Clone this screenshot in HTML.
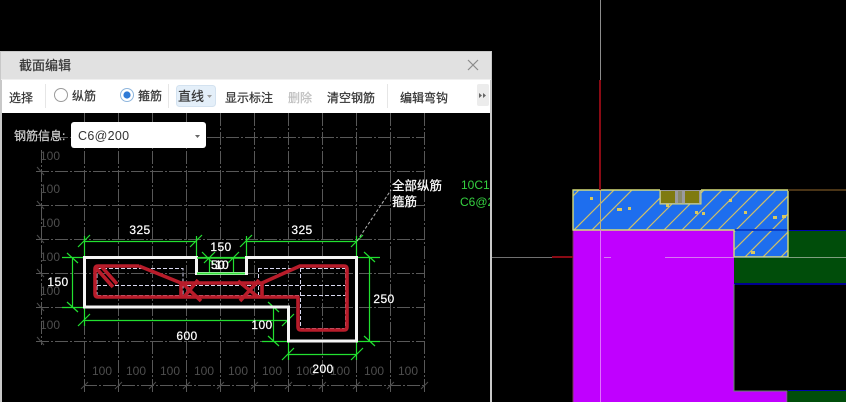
<!DOCTYPE html>
<html><head><meta charset="utf-8"><style>
html,body{margin:0;padding:0;background:#000;width:846px;height:402px;overflow:hidden}
svg{display:block}
text{font-family:"Liberation Sans","Noto Sans CJK SC",sans-serif}
.h text,text.h{stroke:currentColor;stroke-width:.22px}
</style></head><body>
<svg width="846" height="402" viewBox="0 0 846 402" xmlns="http://www.w3.org/2000/svg">
<defs>
<clipPath id="bl"><path d="M573 190H788V257H734V230H573Z"/></clipPath>
<clipPath id="cv"><rect x="2" y="113" width="488" height="289"/></clipPath>
</defs>
<rect width="846" height="402" fill="#000"/>

<!-- right CAD view -->
<rect x="734" y="230" width="112" height="54" fill="#004d0a"/>
<rect x="788" y="230" width="58" height="1" fill="#0000b0"/>
<rect x="734" y="283" width="112" height="2" fill="#000090"/>
<rect x="788" y="391" width="58" height="11" fill="#004d0a"/>
<rect x="788" y="390" width="58" height="1" fill="#0000b0"/>
<path d="M573 230H734V391H787V402H573Z" fill="#c000ff"/>
<path d="M734 284V391H787V402" fill="none" stroke="#5f8a68" stroke-width="1"/>
<path d="M573 231V402" stroke="#7a3a5a" stroke-width="1"/>
<path d="M573 190H788V257H734V230H573Z" fill="#1e6eee"/>
<g clip-path="url(#bl)" stroke="#d0c068" stroke-width="1.2" fill="none">
<path d="M555 214L581 188M572 232L617 187M590 232L635 187M626 232L671 187M644 232L689 187M662 232L707 187M680 232L725 187M698 232L743 187M716 232L761 187M728 238L779 187M725 259L797 187M743 259L797 205M761 259L797 223M779 259L797 241"/>
</g>
<g fill="#d8c860"><rect x="590" y="197" width="3" height="3"/><rect x="628" y="207" width="3" height="3"/><rect x="617" y="208" width="5" height="3"/><rect x="666" y="204" width="3" height="3"/><rect x="695" y="211" width="3" height="3"/><rect x="729" y="199" width="3" height="3"/><rect x="744" y="211" width="3" height="3"/><rect x="773" y="216" width="4" height="3"/><rect x="782" y="215" width="4" height="3"/><rect x="751" y="251" width="4" height="3"/><rect x="702" y="212" width="3" height="3"/></g>
<rect x="734" y="229" width="54" height="2" fill="#0a3ec8"/>
<path d="M660 190H573V230H734V257H788V190H701" fill="none" stroke="#d6dc78" stroke-width="1.4"/>
<rect x="660" y="190" width="41" height="14" fill="#9a9aa0"/>
<rect x="661" y="191" width="14" height="12" fill="#7f7a10"/>
<rect x="685" y="191" width="14" height="12" fill="#7f7a10"/>
<rect x="678" y="191" width="4" height="12" fill="#8a8a6a"/>
<path d="M660 190V204H701V190" fill="none" stroke="#d6dc78" stroke-width="1"/>
<rect x="788" y="189" width="58" height="2" fill="#4a3416"/>
<!-- crosshair -->
<rect x="600" y="0" width="1" height="81" fill="#8c8c8c"/>
<rect x="599" y="80" width="2" height="110" fill="#8a0a14"/>
<rect x="600" y="190" width="1" height="40" fill="#b8b080"/>
<rect x="600" y="230" width="1" height="172" fill="#e070ff"/>
<rect x="492" y="257" width="60" height="1" fill="#707070"/>
<rect x="552" y="256" width="21" height="2" fill="#8a0a14"/>
<rect x="665" y="257" width="69" height="1" fill="#d878f0"/>
<rect x="604" y="257" width="7" height="1" fill="#d878f0"/>
<rect x="734" y="257" width="112" height="1" fill="#7f9f80"/>

<!-- dialog -->
<rect x="0" y="51" width="492" height="351" fill="#c8c8c8"/>
<rect x="1" y="52" width="490" height="28" fill="#e1e1e1"/>
<rect x="1" y="79" width="490" height="1" fill="#f0f0f0"/>
<rect x="2" y="80" width="488" height="33" fill="#fff"/>
<rect x="2" y="113" width="488" height="289" fill="#000"/>
<text class="h" x="19" y="70" font-size="13" fill="#333" color="#333">截面编辑</text>
<path d="M468 60L478 70M478 60L468 70" stroke="#8a8a8a" stroke-width="1.2" fill="none"/>

<g class="h" font-size="12" fill="#333" color="#333">
<text x="9" y="102">选择</text>
<text x="72" y="100">纵筋</text>
<text x="138" y="100">箍筋</text>
<text x="225" y="102">显示标注</text>
<text x="288" y="102" fill="#bdbdbd" color="#bdbdbd">删除</text>
<text x="327" y="102">清空钢筋</text>
<text x="400" y="102">编辑弯钩</text>
</g>
<rect x="45" y="84" width="1" height="24" fill="#e6e6e6"/>
<rect x="168" y="84" width="1" height="24" fill="#e6e6e6"/>
<rect x="387" y="84" width="1" height="24" fill="#e6e6e6"/>
<circle cx="61" cy="95" r="6.5" fill="#fff" stroke="#9a9a9a"/>
<circle cx="127" cy="95" r="6.5" fill="#fff" stroke="#8fb6dd"/>
<circle cx="127" cy="95" r="3.6" fill="#2f7ad6"/>
<rect x="176.500" y="85.500" width="39" height="21" rx="3" fill="#e4eff9" stroke="#d3e2f0"/>
<text class="h" x="178" y="101" font-size="13" fill="#333" color="#333">直线</text>
<path d="M207 95h5l-2.500 3z" fill="#9a9a9a"/>
<rect x="477" y="84" width="12" height="22" rx="2" fill="#ececec"/>
<path d="M479 93v5l3-2.500zM483 93v5l3-2.500z" fill="#666"/>

<g clip-path="url(#cv)">
<!-- grid -->
<g stroke="#585858" stroke-width="1" stroke-dasharray="13 2 2 2" fill="none">
<path d="M84.500 113V394M118.500 113V394M152.500 113V394M186.500 113V394M220.500 113V394M254.500 113V394M288.500 113V394M322.500 113V394M356.500 113V394M390.500 113V394M424.500 113V394"/>
<path d="M36 137.500H425M36 171.500H425M36 205.500H425M36 239.500H425M36 273.500H425M36 307.500H425M36 341.500H425M84 385.500H425"/>
<path d="M41.500 150V345"/>
</g>
<g stroke="#4c4c4c" stroke-width="1" fill="none">
<path d="M37 167L44 175M37 201L44 209M37 235L44 243M37 269L44 277M37 303L44 311M37 337L44 345"/>
<path d="M81 389L88 382M115 389L122 382M149 389L156 382M183 389L190 382M217 389L224 382M251 389L258 382M285 389L292 382M319 389L326 382M353 389L360 382M387 389L394 382M421 389L428 382"/>
</g>
<g font-size="12" fill="#4e4e4e">
<text x="40" y="160">100</text><text x="40" y="193">100</text><text x="40" y="227">100</text><text x="40" y="261">100</text><text x="40" y="295">100</text><text x="40" y="329">100</text>
<text x="92" y="375">100</text><text x="126" y="375">100</text><text x="160" y="375">100</text><text x="194" y="375">100</text><text x="228" y="375">100</text><text x="262" y="375">100</text><text x="296" y="375">100</text><text x="330" y="375">100</text><text x="364" y="375">100</text><text x="398" y="375">100</text>
</g>

<!-- inner dashed -->
<g stroke="#d8d8f0" stroke-width="1" stroke-dasharray="4 2" fill="none">
<path d="M97 268.500H183V295M97 285.500H345M97 295.500H345M97 268V295M258.500 268V295M258 268.500H345M300.500 268V328M345.500 268V328M300 328.500H345"/>
</g>

<!-- green dims -->
<g stroke="#22e030" stroke-width="1.200" fill="none">
<path d="M84.500 236V257M196.500 236V257M246.500 236V257M356.500 236V257"/>
<path d="M84 241.500H196M246 241.500H357"/>
<path d="M78 247L90 235M190 247L202 235M240 247L252 235M351 247L363 235"/>
<path d="M62 257.500H84M62 307.500H84M72.500 257V307M67 253L78 263M67 302L78 312"/>
<path d="M357 257.500H380M357 341.500H380M369.500 257V341M364 252L375 262M364 336L375 346"/>
<path d="M84.500 307V326M288.500 307V326M84 320.500H288M78 326L90 314M282 326L294 314"/>
<path d="M262 307.500H288M262 341.500H288M273.500 307V341M268 302L279 312M268 336L279 346"/>
<path d="M288.500 341V360M356.500 341V360M288 354.500H357M282 360L294 348M351 360L363 348"/>
<path d="M196 257.500H246M209.500 257V273M233.500 257V273M204 263L215 252M228 263L239 252M202 252L214 264"/>
</g>
<!-- white section -->
<path d="M84.500 257.500H196.500V273.500H246.500V257.500H356.500V341H288.500V307H84.500Z" fill="none" stroke="#f4f4f4" stroke-width="3"/>
<path d="M197 273.500H245" stroke="#30e038" stroke-width="2"/>
<path d="M197 258H245" stroke="#30e038" stroke-width="1.500"/>
<!-- red stirrup -->
<g stroke="#b81c2a" stroke-width="3.600" fill="none" stroke-linejoin="round">
<path d="M139 266H98Q95 266 95 269V294Q95 297 98 297H298V327Q298 330 301 330H344Q347 330 347 327V269Q347 266 344 266H300L262 283H181L139 266"/>
<path d="M96 268L113 287M101 266L117 284"/>
<path d="M181 283V297M262 283V297"/>
<path d="M181 282L201 301M198 280L184 297M240 301L259 280M238 281L258 297"/>
</g>
<!-- white labels -->
<g class="h" font-size="12" fill="#fff" color="#fff" letter-spacing=".4" text-anchor="middle">
<text x="140" y="234">325</text>
<text x="302" y="234">325</text>
<text x="221" y="251">150</text>
<text x="58" y="286">150</text>
<text x="384" y="303">250</text>
<text x="187" y="340">600</text>
<text x="262" y="329">100</text>
<text x="323" y="373">200</text>
<text x="218" y="269">50</text>
<text x="222" y="269">10</text>
</g>
<path d="M357 241L391 190" stroke="#b5b5b5" stroke-width="1" stroke-dasharray="3 2" fill="none"/>
<text class="h" x="392" y="190" font-size="12.500" fill="#fff" color="#fff">全部纵筋</text>
<text class="h" x="392" y="206" font-size="12.500" fill="#fff" color="#fff">箍筋</text>
<text x="461" y="189" font-size="12" fill="#35d040">10C10</text>
<text x="460" y="206" font-size="12" fill="#35d040">C6@200</text>
</g>

<!-- info combo -->
<text class="h" x="14" y="140" font-size="12" fill="#d0d0d0" color="#d0d0d0">钢筋信息:</text>
<rect x="71" y="122" width="135" height="26" rx="3" fill="#fff"/>
<text x="78" y="140" font-size="12.500" fill="#333" letter-spacing=".3">C6@200</text>
<path d="M195 135h5l-2.500 3z" fill="#666"/>
</svg>
</body></html>
